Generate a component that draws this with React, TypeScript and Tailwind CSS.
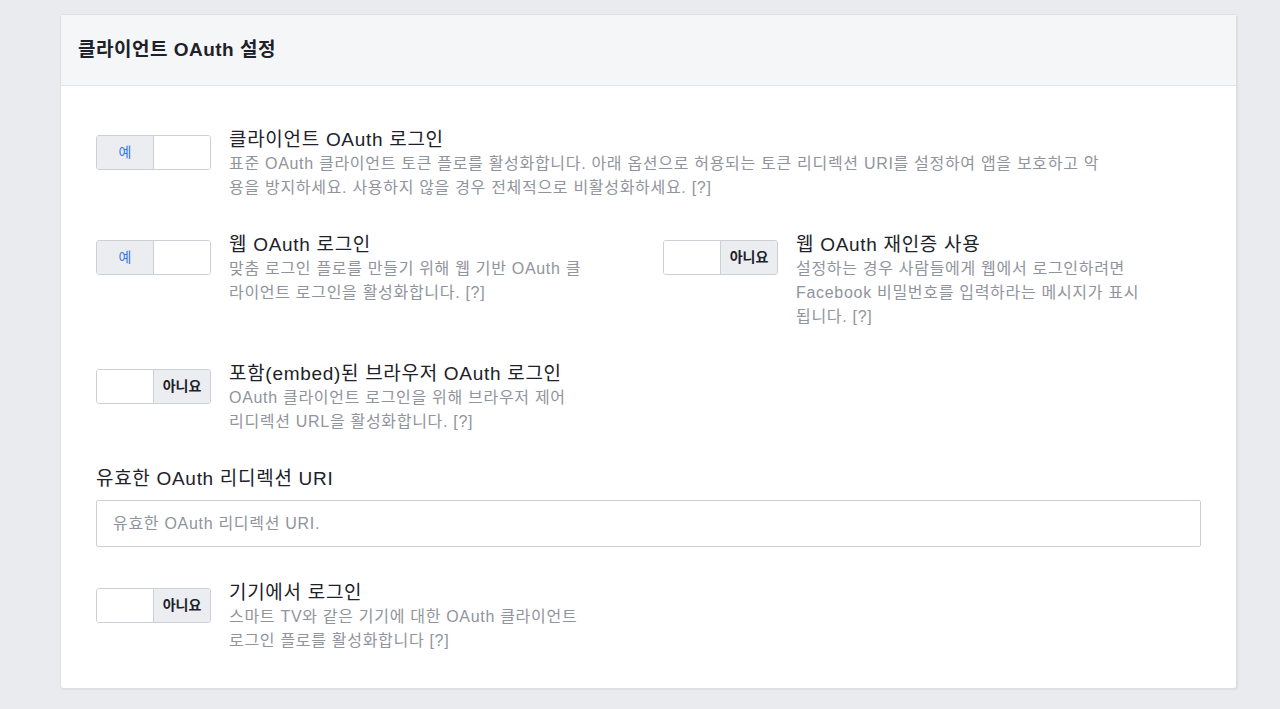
import React from "react";

const font = { fontFamily: '"Liberation Sans", "Noto Sans CJK KR", sans-serif' };

function Toggle({ on }: { on: boolean }) {
  return (
    <div className="flex h-[35px] w-[115px] shrink-0 overflow-hidden rounded-[3px] border border-[#ccd0d5] bg-white">
      {on ? (
        <>
          <div className="flex w-[57px] items-center justify-center border-r border-[#ccd0d5] bg-[#ebedf0] text-[14px] text-[#3578e5]">
            예
          </div>
          <div className="flex-1 bg-white" />
        </>
      ) : (
        <>
          <div className="w-[57px] border-r border-[#ccd0d5] bg-white" />
          <div className="flex flex-1 items-center justify-center bg-[#ebedf0] text-[14px] font-semibold text-[#1d2129]">
            아니요
          </div>
        </>
      )}
    </div>
  );
}

function Setting({ on, title, lines }: { on: boolean; title: string; lines: string[] }) {
  return (
    <div className="flex items-start">
      <div className="mt-[8px]">
        <Toggle on={on} />
      </div>
      <div className="ml-[18px] pt-[1px]">
        <div className="text-[19px] leading-[24px] tracking-[0.7px] text-[#1d2129] whitespace-nowrap">{title}</div>
        <div className="text-[16px] leading-[24px] tracking-[0.7px] text-[#90949c] whitespace-nowrap">
          {lines.map((l, i) => (
            <div key={i}>{l}</div>
          ))}
        </div>
      </div>
    </div>
  );
}

export default function App() {
  return (
    <div className="min-h-screen bg-[#e9ebee] pt-[14px] pb-[20px]" style={font}>
      <div className="ml-[60px] w-[1177px] rounded-[3px] border border-[#dddfe2] bg-white shadow-[1px_1px_1px_rgba(0,0,0,0.06)]">
        <div className="flex h-[71px] items-center border-b border-[#e5e5e5] bg-[#f5f6f7] px-[17px]">
          <h2 className="text-[19px] font-bold tracking-[0.5px] text-[#1d2129]">클라이언트 OAuth 설정</h2>
        </div>

        <div className="px-[35px] pt-[41px] pb-[35px]">
          <Setting
            on={true}
            title="클라이언트 OAuth 로그인"
            lines={[
              "표준 OAuth 클라이언트 토큰 플로를 활성화합니다. 아래 옵션으로 허용되는 토큰 리디렉션 URI를 설정하여 앱을 보호하고 악",
              "용을 방지하세요. 사용하지 않을 경우 전체적으로 비활성화하세요.  [?]",
            ]}
          />

          <div className="mt-[32px] grid grid-cols-[567px_1fr]">
            <Setting
              on={true}
              title="웹 OAuth 로그인"
              lines={["맞춤 로그인 플로를 만들기 위해 웹 기반 OAuth 클", "라이언트 로그인을 활성화합니다.  [?]"]}
            />
            <Setting
              on={false}
              title="웹 OAuth 재인증 사용"
              lines={[
                "설정하는 경우 사람들에게 웹에서 로그인하려면",
                "Facebook 비밀번호를 입력하라는 메시지가 표시",
                "됩니다. [?]",
              ]}
            />
          </div>

          <div className="mt-[32px]">
            <Setting
              on={false}
              title="포함(embed)된 브라우저 OAuth 로그인"
              lines={["OAuth 클라이언트 로그인을 위해 브라우저 제어", "리디렉션 URL을 활성화합니다.  [?]"]}
            />
          </div>

          <div className="mt-[34px]">
            <label className="block text-[19px] leading-[22px] tracking-[0.7px] text-[#1d2129]">유효한 OAuth 리디렉션 URI</label>
            <input
              type="text"
              placeholder="유효한 OAuth 리디렉션 URI."
              className="mt-[10px] h-[47px] w-full rounded-[2px] border border-[#ccd0d5] bg-white px-[16px] text-[16px] tracking-[0.7px] text-[#1d2129] outline-none placeholder:text-[#90949c]"
            />
          </div>

          <div className="mt-[33px]">
            <Setting
              on={false}
              title="기기에서 로그인"
              lines={["스마트 TV와 같은 기기에 대한 OAuth 클라이언트", "로그인 플로를 활성화합니다 [?]"]}
            />
          </div>
        </div>
      </div>
    </div>
  );
}
